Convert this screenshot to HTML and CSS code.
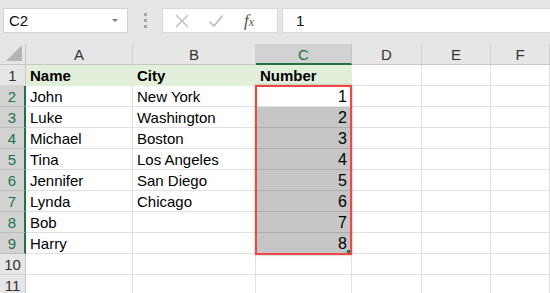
FILE: index.html
```html
<!DOCTYPE html>
<html lang="en">
<head>
    <meta charset="UTF-8">
    <title>Sheet</title>
    <link rel="stylesheet" href="styles.css">
</head>
<body>
    <div class="toolbar">
        <div class="namebox">
            <span>C2</span>
            <span class="arrow"></span>
        </div>
        <div class="dots"><i></i><i></i><i></i></div>
        <div class="buttons">
            <span class="btn cancel">
                <svg width="14" height="14" viewBox="0 0 14 14"><path d="M1 1 L13 13 M13 1 L1 13" stroke="#bdbdbd" stroke-width="1.3"/></svg>
            </span>
            <span class="btn ok">
                <svg width="16" height="14" viewBox="0 0 16 14"><path d="M1.5 7.5 L6 12 L14.5 1.5" fill="none" stroke="#b9b9b9" stroke-width="1.6"/></svg>
            </span>
            <span class="btn fx">f<sub>x</sub></span>
        </div>
        <div class="formula">1</div>
    </div>

    <div class="sheet">
        <!-- header row -->
        <div class="corner">
            <svg width="16" height="16" viewBox="0 0 16 16"><polygon points="16,0 16,16 0,16" fill="#b5b5b5"/></svg>
        </div>
        <div class="colhead">A</div>
        <div class="colhead">B</div>
        <div class="colhead active">C</div>
        <div class="colhead">D</div>
        <div class="colhead">E</div>
        <div class="colhead">F</div>

        <!-- row 1 -->
        <div class="rowhead">1</div>
        <div class="cell head">Name</div>
        <div class="cell head">City</div>
        <div class="cell head">Number</div>
        <div class="cell"></div><div class="cell"></div><div class="cell"></div>

        <div class="rowhead active">2</div>
        <div class="cell">John</div>
        <div class="cell">New York</div>
        <div class="cell num current">1
            <!-- red box round the selection C2:C9 -->
            <div class="selection"><span class="handle"></span></div>
        </div>
        <div class="cell"></div><div class="cell"></div><div class="cell"></div>

        <div class="rowhead active">3</div>
        <div class="cell">Luke</div>
        <div class="cell">Washington</div>
        <div class="cell num sel">2</div>
        <div class="cell"></div><div class="cell"></div><div class="cell"></div>

        <div class="rowhead active">4</div>
        <div class="cell">Michael</div>
        <div class="cell">Boston</div>
        <div class="cell num sel">3</div>
        <div class="cell"></div><div class="cell"></div><div class="cell"></div>

        <div class="rowhead active">5</div>
        <div class="cell">Tina</div>
        <div class="cell">Los Angeles</div>
        <div class="cell num sel">4</div>
        <div class="cell"></div><div class="cell"></div><div class="cell"></div>

        <div class="rowhead active">6</div>
        <div class="cell">Jennifer</div>
        <div class="cell">San Diego</div>
        <div class="cell num sel">5</div>
        <div class="cell"></div><div class="cell"></div><div class="cell"></div>

        <div class="rowhead active">7</div>
        <div class="cell">Lynda</div>
        <div class="cell">Chicago</div>
        <div class="cell num sel">6</div>
        <div class="cell"></div><div class="cell"></div><div class="cell"></div>

        <div class="rowhead active">8</div>
        <div class="cell">Bob</div>
        <div class="cell"></div>
        <div class="cell num sel">7</div>
        <div class="cell"></div><div class="cell"></div><div class="cell"></div>

        <div class="rowhead active">9</div>
        <div class="cell">Harry</div>
        <div class="cell"></div>
        <div class="cell num sel">8</div>
        <div class="cell"></div><div class="cell"></div><div class="cell"></div>

        <div class="rowhead">10</div>
        <div class="cell"></div><div class="cell"></div><div class="cell"></div>
        <div class="cell"></div><div class="cell"></div><div class="cell"></div>

        <div class="rowhead">11</div>
        <div class="cell"></div><div class="cell"></div><div class="cell"></div>
        <div class="cell"></div><div class="cell"></div><div class="cell"></div>
    </div>
</body>
</html>
```

FILE: styles.css
```css
body {
    margin: 0;
    background-color: #e6e6e6;
    font-family: "Liberation Sans", Arial, sans-serif;
    overflow: hidden;
}

/* barra de formulas */
.toolbar {
    display: flex;
    align-items: flex-start;
    height: 44px;
    padding: 8px 0 0 3px;
    box-sizing: border-box;
}

.namebox {
    width: 125px;
    height: 25px;
    box-sizing: border-box;
    background-color: #fff;
    border: 1px solid #d2d2d2;
    display: flex;
    align-items: center;
    justify-content: space-between;
    padding: 0 9px 0 5px;
    font-size: 15px;
    color: #111;
}

.arrow {
    width: 0;
    height: 0;
    border-left: 3px solid transparent;
    border-right: 3px solid transparent;
    border-top: 3px solid #777;
}

.dots {
    width: 34px;
    height: 25px;
    display: flex;
    flex-direction: column;
    align-items: center;
    justify-content: center;
    gap: 3px;
}

.dots i {
    width: 3px;
    height: 3px;
    background-color: #a8a8a8;
}

.buttons {
    width: 116px;
    height: 25px;
    box-sizing: border-box;
    background-color: #fff;
    border: 1px solid #d8d8d8;
    display: flex;
    align-items: center;
    padding-left: 12px;
}

.btn {
    width: 39px;
    display: flex;
    justify-content: flex-start;
    align-items: center;
}

.fx {
    font-family: "Liberation Serif", serif;
    font-style: italic;
    font-size: 17px;
    color: #555;
    padding-left: 3px;
}

.fx sub {
    font-size: 12px;
    vertical-align: 0;
    position: relative;
    top: 2px;
}

.formula {
    flex: 1;
    height: 25px;
    box-sizing: border-box;
    margin-left: 4px;
    background-color: #fff;
    border: 1px solid #d8d8d8;
    border-right: none;
    padding-left: 13px;
    font-size: 15px;
    line-height: 23px;
    color: #111;
}

/* hoja */
.sheet {
    display: grid;
    grid-template-columns: 26px 107px 123px 96px 70px 69px 59px;
    grid-auto-rows: 21px;
    background-color: #fff;
}

.sheet > div {
    box-sizing: border-box;
}

.corner {
    background-color: #e6e6e6;
    border-right: 1px solid #c8c8c8;
    border-bottom: 1px solid #c8c8c8;
    display: flex;
    align-items: flex-end;
    justify-content: flex-end;
    padding: 0 3px 3px 0;
}

.colhead {
    background-color: #e6e6e6;
    border-right: 1px solid #d0d0d0;
    border-bottom: 1px solid #c8c8c8;
    text-align: center;
    font-size: 15px;
    line-height: 22px;
    color: #333;
}

.colhead.active {
    background-color: #d2d2d2;
    color: #217346;
    border-bottom: 2px solid #217346;
    border-right-color: #c4c4c4;
}

.rowhead {
    background-color: #e6e6e6;
    border-right: 1px solid #c8c8c8;
    border-bottom: 1px solid #d4d4d4;
    text-align: center;
    font-size: 15px;
    line-height: 22px;
    color: #333;
}

.rowhead.active {
    background-color: #d2d2d2;
    color: #217346;
    border-right: 2px solid #217346;
    border-bottom-color: #bcbcbc;
}

.cell {
    border-right: 1px solid #e1e1e1;
    border-bottom: 1px solid #e1e1e1;
    padding: 0 4px;
    font-size: 15px;
    line-height: 22px;
    color: #000;
    white-space: nowrap;
}

.cell.head {
    background-color: #e2efda;
    font-weight: bold;
    border-right-color: #e2efda;
    border-bottom-color: #e2efda;
}

.cell.num {
    text-align: right;
    font-size: 16px;
}

.cell.sel {
    background-color: #c6c6c6;
    border-bottom-color: #adadad;
    border-right-color: #c6c6c6;
}

.cell.current {
    background-color: #fff;
    position: relative;
}

.selection {
    position: absolute;
    top: -1px;
    left: -1px;
    right: -1px;
    height: 170px;
    box-sizing: border-box;
    border: 2px solid #f04646;
    box-shadow: 0 0 2px rgba(0, 0, 0, 0.35);
    pointer-events: none;
    z-index: 1;
}

.handle {
    position: absolute;
    right: 0;
    bottom: 0;
    width: 3px;
    height: 3px;
    background-color: #217346;
}
```
